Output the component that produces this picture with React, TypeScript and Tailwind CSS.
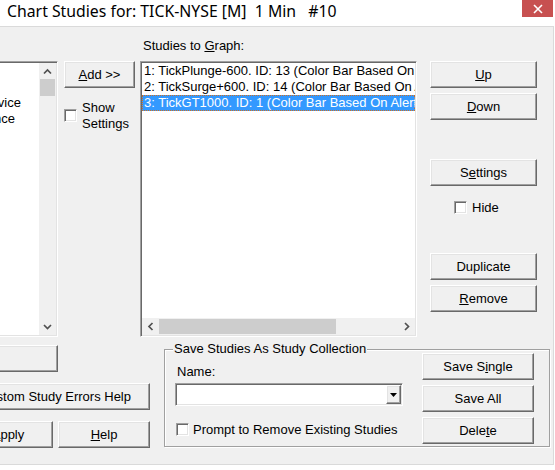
import React from 'react';

const face = "font-['Liberation_Sans',Arial,sans-serif] text-[13px] text-black";

// classic 3D edges
const raised =
  'bg-[#f0f0f0] border border-t-white border-l-white border-r-[#696969] border-b-[#696969] shadow-[inset_-1px_-1px_0_#a0a0a0,inset_1px_1px_0_#e3e3e3]';
const sunken =
  'bg-white border border-t-[#a0a0a0] border-l-[#a0a0a0] border-r-white border-b-white shadow-[inset_1px_1px_0_#696969,inset_-1px_-1px_0_#e3e3e3]';

type BtnProps = { className?: string; children?: React.ReactNode };

const Button: React.FC<BtnProps> = ({ className = '', children }) => (
  <button
    type="button"
    className={`flex h-[27px] shrink-0 items-center justify-center leading-none ${raised} ${className}`}
  >
    {children}
  </button>
);

const CheckBox: React.FC<{ className?: string }> = ({ className = '' }) => (
  <span className={`block h-[13px] w-[13px] shrink-0 ${sunken} ${className}`} />
);

const Chevron: React.FC<{ dir: 'up' | 'down' | 'left' | 'right' }> = ({ dir }) => {
  const pts = {
    up: '1,5.5 4.5,2 8,5.5',
    down: '1,2 4.5,5.5 8,2',
    left: '5.5,1 2,4.5 5.5,8',
    right: '2,1 5.5,4.5 2,8',
  }[dir];
  const vertical = dir === 'up' || dir === 'down';
  return (
    <svg width={vertical ? 9 : 7} height={vertical ? 7 : 9}>
      <polyline points={pts} fill="none" stroke="#505050" strokeWidth="1.7" />
    </svg>
  );
};

const VScroll = () => (
  <div className="flex w-[17px] shrink-0 flex-col bg-[#f0f0f0]">
    <div className="flex h-[16px] items-center justify-center">
      <Chevron dir="up" />
    </div>
    <div className="mx-[1px] h-[17px] bg-[#cdcdcd]" />
    <div className="flex-1" />
    <div className="flex h-[17px] items-center justify-center">
      <Chevron dir="down" />
    </div>
  </div>
);

const HScroll = () => (
  <div className="flex h-[17px] shrink-0 bg-[#f0f0f0]">
    <div className="flex w-[17px] items-center justify-center">
      <Chevron dir="left" />
    </div>
    <div className="my-[1px] w-[177px] bg-[#cdcdcd]" />
    <div className="flex-1" />
    <div className="flex w-[17px] items-center justify-center">
      <Chevron dir="right" />
    </div>
  </div>
);

const available = [
  { name: 'Bar Statistics', w: 'w-[90px]' },
  { name: 'Candle Pattern', w: 'w-[92px]' },
  { name: 'Chart Data Service', w: 'w-[119px]' },
  { name: 'Price Balance', w: 'w-[113px]' },
];

const studies = [
  '1: TickPlunge-600. ID: 13 (Color Bar Based On Alert Condition)',
  '2: TickSurge+600. ID: 14 (Color Bar Based On Alert Condition)',
];

export default function App() {
  return (
    <div className={`h-[470px] w-[555px] overflow-hidden bg-white ${face}`}>
      {/* title bar */}
      <div className="flex h-[26px] items-start justify-between">
        <span className="whitespace-pre pl-[7px] pt-[1px] font-['Noto_Sans',sans-serif] text-[15.8px] leading-[21px] text-black">
          Chart Studies for: TICK-NYSE [M]  1 Min   #10
        </span>
        <span className="mr-[2px] flex h-[17px] w-[31px] items-center justify-center bg-[#c75050]">
          <svg width="10" height="10">
            <path d="M1 1L9 9M9 1L1 9" stroke="#fff" strokeWidth="1.6" />
          </svg>
        </span>
      </div>

      <div className="h-[439px] w-[554px] overflow-hidden border-t border-r border-b border-[#dadada] bg-[#f0f0f0]">
        {/* upper half: lists and their buttons */}
        <div className="flex items-start pt-[11px]">
          <div className={`-ml-[100px] mt-[23px] flex h-[276px] w-[158px] shrink-0 p-[1px] ${sunken}`}>
            <div className="flex-1 overflow-hidden whitespace-nowrap leading-[16px]">
              {available.map((s) => (
                <div key={s.name} className={`flex justify-end ${s.w}`}>
                  {s.name}
                </div>
              ))}
            </div>
            <VScroll />
          </div>

          <div className="ml-[6px] mt-[23px] w-[71px] shrink-0">
            <Button className="w-full">
              <u>A</u>dd &gt;&gt;
            </Button>
            <div className="mt-[12px] flex items-start gap-[5px]">
              <CheckBox className="mt-[9px]" />
              <div className="leading-[16px]">
                Show
                <br />
                Settings
              </div>
            </div>
          </div>

          <div className="ml-[5px] w-[277px] shrink-0">
            <div className="h-[23px] pl-[3px] leading-[15px]">
              Studies to <u>G</u>raph:
            </div>
            <div className={`flex h-[276px] flex-col p-[1px] ${sunken}`}>
              <div className="flex-1 overflow-hidden whitespace-nowrap leading-[16px]">
                {studies.map((s) => (
                  <div key={s} className="pl-[2px]">
                    {s}
                  </div>
                ))}
                <div className="border border-dotted border-[#d07020] bg-[#3399ff] pl-[1px] leading-[14px] text-white">
                  3: TickGT1000. ID: 1 (Color Bar Based On Alert Condition)
                </div>
              </div>
              <HScroll />
            </div>
          </div>

          <div className="ml-[13px] mt-[23px] flex w-[107px] shrink-0 flex-col">
            <Button>
              <u>U</u>p
            </Button>
            <Button className="mt-[5px]">
              <u>D</u>own
            </Button>
            <Button className="mt-[39px]">
              S<u>e</u>ttings
            </Button>
            <div className="mt-[14px] flex items-center gap-[5px] pl-[24px] leading-[15px]">
              <CheckBox />
              Hide
            </div>
            <Button className="mt-[38px]">Duplicate</Button>
            <Button className="mt-[5px]">
              <u>R</u>emove
            </Button>
          </div>
        </div>

        {/* lower half: dialog buttons and the collection group */}
        <div className="flex items-start">
          <div className="-ml-[100px] mt-[8px] flex w-[250px] shrink-0 flex-col items-end">
            <Button className="mr-[92px] w-[158px]" />
            <Button className="mt-[11px] w-[189px]">Custom Study Errors Help</Button>
            <div className="mt-[11px] flex gap-[5px]">
              <Button className="w-[90px]">
                <u>A</u>pply
              </Button>
              <Button className="w-[92px]">
                <u>H</u>elp
              </Button>
            </div>
          </div>

          <div className="relative ml-[14px] mt-[12px] flex h-[98px] w-[386px] shrink-0 border border-[#a0a0a0] shadow-[inset_1px_1px_0_#fff,1px_1px_0_#fff]">
            <span className="absolute -top-[9px] left-[8px] bg-[#f0f0f0] px-[1px] leading-[15px]">
              Save Studies As Study Collection
            </span>
            <div className="ml-[10px] mt-[14px] w-[228px] shrink-0">
              <div className="pl-[2px] leading-[15px]">Name:</div>
              <div className={`mt-[4px] flex h-[23px] justify-end p-[1px] ${sunken}`}>
                <div className={`flex w-[15px] items-center justify-center ${raised}`}>
                  <svg width="7" height="4">
                    <path d="M0 0H7L3.5 4Z" fill="#000" />
                  </svg>
                </div>
              </div>
              <div className="mt-[16px] flex items-center gap-[4px] pl-[1px] leading-[15px]">
                <CheckBox />
                Prompt to Remove Existing Studies
              </div>
            </div>
            <div className="ml-[19px] mt-[3px] flex w-[112px] shrink-0 flex-col">
              <Button>
                Save S<u>i</u>ngle
              </Button>
              <Button className="mt-[5px]">Save All</Button>
              <Button className="mt-[5px]">
                Dele<u>t</u>e
              </Button>
            </div>
          </div>
        </div>
      </div>
    </div>
  );
}
